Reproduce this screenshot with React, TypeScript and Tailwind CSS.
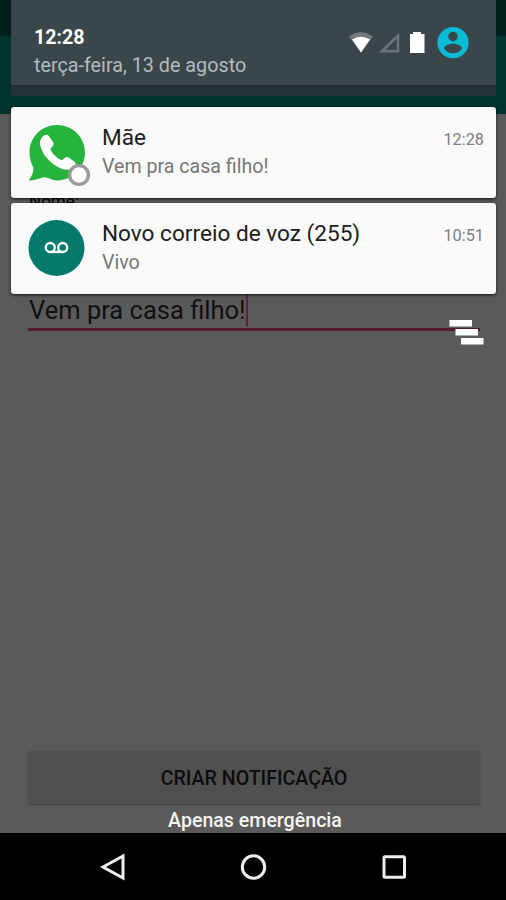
import type { ReactNode } from "react";

interface NotificationProps {
  icon: ReactNode;
  title: string;
  text: string;
  time: string;
}

function WhatsAppIcon() {
  return (
    <svg width="64" height="64" viewBox="0 0 64 64">
      <path
        d="M29 1C44.500 1 57 13.200 57 28.600S44.500 56.500 29 56.500C24 56.500 20 53 15.500 53.300C10 55.200 5.500 56.400 0.500 56.600C3.800 52 5.700 48.500 5.300 43.500C3 39 1.500 34 1.500 28.600C1.500 13.200 13.500 1 29 1Z"
        fill="#25b33b"
      />
      <path
        d="M16 11.500C17.500 10.300 19.700 10.500 20.800 12L25 18C26 19.600 25.700 21.300 24.500 22.500L22.300 24.800C23 28.800 29.500 35 34 36.200L36.700 34C38 32.900 39.700 32.800 41 33.700L46.500 37.800C48 39 48 41 46.600 42.600C43 46.300 38.200 46.700 33 44.500C23.500 40.500 15 32 12.500 22.500C11.200 17.300 12.700 14.200 16 11.500Z"
        fill="#fff"
      />
      <circle cx="51" cy="51" r="9.400" fill="#fff" stroke="#999" strokeWidth="3.400" />
    </svg>
  );
}

function VoicemailIcon() {
  return (
    <svg width="57" height="57" viewBox="0 0 57 57">
      <circle cx="28.500" cy="28" r="28" fill="#047a6d" />
      <g fill="none" stroke="#fff" strokeWidth="2.300">
        <circle cx="22.300" cy="27.500" r="4.500" />
        <circle cx="34.700" cy="27.500" r="4.500" />
        <path d="M22.300 32H34.700" />
      </g>
    </svg>
  );
}

function Notification({ icon, title, text, time }: NotificationProps) {
  return (
    <article className="flex h-[91px] rounded-[3px] bg-[#fafafa] pt-[17px] pr-3 pl-[17px] shadow-[0_1px_3px_rgba(0,0,0,0.8)]">
      <div className="w-[74px] shrink-0">{icon}</div>
      <div className="min-w-0 flex-1 whitespace-nowrap">
        <h2 className="text-[22.6px] leading-[28px] text-[#202020]">{title}</h2>
        <p className="text-[19.6px] leading-[30px] text-[#777]">{text}</p>
      </div>
      <time className="pt-[3px] text-[16.3px] leading-[26px] text-[#808080]">{time}</time>
    </article>
  );
}

function StatusIcons() {
  return (
    <div className="flex items-center">
      <svg width="92" height="34" viewBox="0 0 92 34">
        <path d="M4 10.500Q16 2 28 10.500L16 26.500Z" fill="#737b7f" />
        <path d="M7 13.500Q16 8 25 13.500L16 26.500Z" fill="#fff" />
        <path d="M37 25.300H53V9.500Z" fill="none" stroke="#6b7478" strokeWidth="2.500" />
        <path d="M68 6H76V8H79.500V27H65V8H68Z" fill="#fff" />
      </svg>
      <svg width="32" height="32" viewBox="0 0 32 32">
        <circle cx="16" cy="15.700" r="15.600" fill="#0abbd5" />
        <circle cx="16" cy="9.500" r="4.700" fill="#3b464b" />
        <path d="M7 21.500C7 18.500 12.500 16.800 16 16.800S25 18.500 25 21.500C23 24.500 20 26.200 16 26.200S9 24.500 7 21.500Z" fill="#3b464b" />
      </svg>
    </div>
  );
}

function MessageForm() {
  return (
    <main className="flex flex-1 flex-col bg-[#5a5a5a] pr-[26px] pl-7">
      <div className="mt-[76px] h-[22px] pl-px text-[17px] leading-[22px] text-black">Nome:</div>
      <div className="mt-[83px] flex h-[36px] border-b-[3px] border-[#561b2d]">
        <span className="whitespace-nowrap pl-px text-[25.500px] leading-[30px] text-[#101010]">Vem pra casa filho!</span>
        <span className="h-[31px] w-[2px] bg-[#75153a]" />
      </div>
      <button className="mt-auto mb-[29px] h-[53px] rounded-[3px] bg-[#505050] pt-[2px] text-[19.6px] font-medium text-[#0c0c0c] shadow-[0_1px_2px_rgba(0,0,0,0.3)]">
        CRIAR NOTIFICAÇÃO
      </button>
    </main>
  );
}

function NavigationBar() {
  return (
    <nav className="flex h-[67px] items-center justify-center bg-black">
      <svg width="308" height="30" viewBox="0 0 308 30" fill="none" stroke="#eee" strokeWidth="3">
        <path d="M4 15L24 4V26Z" />
        <circle cx="154.500" cy="15" r="11.200" />
        <rect x="285" y="4.700" width="20.500" height="20.500" rx="1" />
      </svg>
    </nav>
  );
}

export default function App() {
  return (
    <div className="relative flex h-[900px] w-[506px] flex-col overflow-hidden font-[Roboto,sans-serif]">
      <div className="h-9 bg-[#00201b]" />
      <div className="h-[78px] bg-[#00332c]" />
      <MessageForm />
      <NavigationBar />

      {/* notification shade, drawn over the app */}
      <div className="absolute inset-x-0 top-0 flex h-[833px] flex-col pr-[10px] pl-[11px]">
        <header className="flex h-[85px] justify-between bg-[#3b464b] pr-[27px] pl-[23px]">
          <div className="whitespace-nowrap pt-[24px]">
            <div className="text-[19.6px] leading-[28px] font-bold text-white">12:28</div>
            <div className="text-[19.75px] leading-[28px] text-[#b1bbc0]">terça-feira, 13 de agosto</div>
          </div>
          <div className="pt-[26px]">
            <StatusIcons />
          </div>
        </header>
        <div className="h-[11px] rounded-b-[3px] border-t-2 border-[#222c31] bg-[#263238]" />
        <div className="mt-[11px] flex flex-col gap-[5px]">
          <Notification icon={<WhatsAppIcon />} title="Mãe" text="Vem pra casa filho!" time="12:28" />
          <Notification icon={<VoicemailIcon />} title="Novo correio de voz (255)" text="Vivo" time="10:51" />
        </div>
        <svg className="mt-[25px] mr-[12px] self-end" width="36" height="27" viewBox="0 0 36 27" fill="#fff">
          <path d="M1.500 1H24V7.500H1.500ZM7.500 10H30V16.500H7.500ZM13 19H35.500V25.500H13Z" />
        </svg>
        <p className="mt-auto pl-[3px] text-center text-[19.6px] leading-[24px] font-medium text-[#f5f5f5]">Apenas emergência</p>
      </div>
    </div>
  );
}
